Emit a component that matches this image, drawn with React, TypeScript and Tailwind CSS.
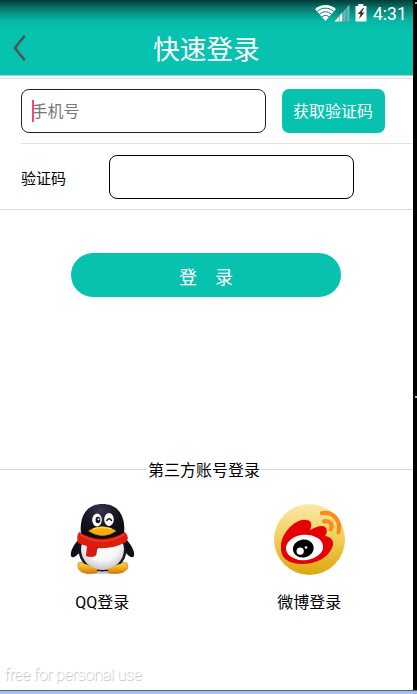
import React from "react";

function StatusBar() {
  return (
    <div className="flex h-[28px] items-start justify-end pr-[7px] text-white">
      <svg className="mt-[4px] h-[18px] w-[52px]" viewBox="0 0 52 18">
        <path d="M0 5C6-.2 15-.2 21 5L10.5 17Z" fill="#fff" />
        <path d="M2.4 7.2C7 3.2 14 3.2 18.6 7.2M4.6 10.1C8.1 7 12.9 7 16.4 10.1M7 12.8C9 11 12 11 14 12.8" fill="none" stroke="#087b72" strokeWidth="1" />
        <path d="M19.5 17.5 34.5 .5V17.5Z" fill="#62b9b0" />
        <path d="M19.5 17.5 27.5 8.5V17.5Z" fill="#fff" />
        <path d="M24.3 12v6M27.8 8v10M31.3 4v14" stroke="#168a80" strokeWidth=".6" />
        <path d="M43.3 0h5v2H51.5v15.5H40.5V2h2.8Z" fill="#fff" />
        <path d="m48 4-5.3 6h2.8l-1.5 5 5.5-6.6h-2.8L49 4Z" fill="#333" />
      </svg>
      <span className="ml-[6px] mt-[2px] w-[33px] whitespace-nowrap text-[17.5px] leading-6">4:31</span>
    </div>
  );
}

function QQIcon() {
  return (
    <svg className="h-[73px] w-[66px]" viewBox="69 503 66 73">
      <defs>
        <radialGradient id="coat" cx=".45" cy=".15" r=".8"><stop stopColor="#37364b" /><stop offset=".55" stopColor="#14131d" /><stop offset="1" stopColor="#09090e" /></radialGradient>
        <radialGradient id="belly" cx=".5" cy=".35" r=".65"><stop stopColor="#fff" /><stop offset=".65" stopColor="#f6f6f8" /><stop offset="1" stopColor="#c2c2cc" /></radialGradient>
        <linearGradient id="foot" x1="0" y1="0" x2="0" y2="1"><stop stopColor="#ffd43c" /><stop offset="1" stopColor="#dd7a00" /></linearGradient>
      </defs>
      <ellipse cx="102" cy="572" rx="22" ry="2" fill="#777" opacity=".4" />
      <path d="M80 538C74 544 70 551 71 556Q73 560 80 552ZM125 538C131 544 135 551 134 556Q132 560 125 552Z" fill="#111019" />
      <path d="M78 563Q87 560 92 566L98 569Q100 573 91 573.5Q82 574 78 568ZM127 563Q118 560 113 566L107 569Q105 573 114 573.5Q124 574 128 568Z" fill="url(#foot)" stroke="#bd6504" strokeWidth=".5" />
      <ellipse cx="102.5" cy="550" rx="24" ry="21.5" fill="#171620" />
      <ellipse cx="102.5" cy="549.5" rx="21.5" ry="20.5" fill="url(#belly)" />
      <path d="M78 567Q82 562 88 565L97 569Q98 573 89 573Q81 573 78 569ZM127 567Q123 562 117 565L108 569Q107 573 116 573Q124 573 127 569Z" fill="url(#foot)" />
      <path d="M81.5 538C78 517 86 504 102.5 504S127 517 123.5 538Q103 550 81.5 538Z" fill="url(#coat)" />
      <ellipse cx="97" cy="520" rx="4.8" ry="6.5" fill="#fff" /><ellipse cx="109" cy="519.5" rx="4.8" ry="6.5" fill="#fff" />
      <ellipse cx="98" cy="520" rx="2.4" ry="3.3" fill="#111" /><circle cx="98.5" cy="519.3" r="1" fill="#fff" />
      <path d="M106.8 520.5Q109.2 517 111.5 520.5" fill="none" stroke="#111" strokeWidth="1.4" strokeLinecap="round" />
      <path d="M79 532Q102 546 125 532Q130 538 126 542Q104 554 78 543Q76 537 79 532Z" fill="#df1d0d" />
      <path d="M80 534.5Q102 548 124 534.5" fill="none" stroke="#f2442b" strokeWidth="1.2" />
      <path d="M87 545Q92 547 98 546L95.5 556Q91 558 86 556Z" fill="#d9190f" />
      <path d="M98 547Q95 550 96 555" fill="none" stroke="#941108" strokeWidth=".8" />
      <path d="M88.5 531Q94 527 102.5 526.5Q111 527 116 531Q111 535 102.5 535.7Q94 535 88.5 531Z" fill="#f9ad10" stroke="#ce7700" strokeWidth=".5" />
      <path d="M93 529Q102 526 111.5 529" stroke="#ffdc45" strokeWidth="1.7" fill="none" />
    </svg>
  );
}

function WeiboIcon() {
  return (
    <svg className="h-[71px] w-[71px]" viewBox="0 0 71 71">
      <defs><linearGradient id="gold" x1="0" y1="0" x2="0" y2="1"><stop stopColor="#fce9aa" /><stop offset=".5" stopColor="#f0cc58" /><stop offset="1" stopColor="#dda60c" /></linearGradient></defs>
      <circle cx="35.5" cy="35.5" r="35.5" fill="url(#gold)" />
      <path d="M7 42C7 31 18 18 28 16C37 15 39 19 36 26Q49 19 52 24Q54 28 51 32C58 33 61 38 58 44C53 55 40 60.5 27 60C13 59.5 6 53 7 42Z" fill="#e50005" />
      <ellipse cx="30.5" cy="43.5" rx="18.6" ry="12.7" transform="rotate(-5 30.5 43.5)" fill="#fff" />
      <ellipse cx="29.3" cy="44.5" rx="10.5" ry="9" transform="rotate(-12 29.3 44.5)" fill="#000" />
      <circle cx="26.2" cy="47.2" r="3.6" fill="#fff" /><circle cx="32" cy="43.5" r="1.3" fill="#fff" />
      <path d="M48 9C60 7.5 67.5 17.5 64.5 28.2M50 17.3C56 16.5 59.2 20.5 56.8 25.4" fill="none" stroke="#ff8a18" strokeWidth="4.2" strokeLinecap="round" />
    </svg>
  );
}

export default function App() {
  return (
    <div className="flex h-[694px] w-[417px] flex-col overflow-hidden bg-white text-black" style={{ fontFamily: 'Roboto, "Noto Sans CJK SC", sans-serif' }}>
      <div className="flex h-[690px]">
        <main className="flex w-[413px] flex-col bg-white">
          <header className="h-[76px] border-b border-[#8de2dc] bg-[#08c2b0] bg-[linear-gradient(to_bottom,#033c37_0px,#067c71_9px,#08b5a4_20px,#08c2b0_29px)]">
            <StatusBar />
            <div className="flex h-[43px] items-center">
              <svg className="-mt-[3px] ml-[13px] h-[26px] w-[13px]" viewBox="0 0 13 26"><path d="M11 1.5 2 13l9 11.5" fill="none" stroke="#4c5750" strokeWidth="2.6" strokeLinecap="round" /></svg>
              <h1 className="ml-[127px] whitespace-nowrap text-[26.7px] font-normal leading-[40px] text-white">快速登录</h1>
            </div>
          </header>
          <section className="mt-[2px] h-[132px] border-y border-[#dedede]">
            <div className="flex h-[64px] pl-[20.5px] pt-[10px]">
              <div className="flex h-[44px] w-[245.5px] items-center rounded-[8px] border border-[#222] pl-[10px]">
                <i className="-mt-[1px] h-[22px] w-[2px] bg-[#ff4081]" />
                <span className="-ml-[2px] mt-[2px] text-[16px] leading-6 text-[#777]">手机号</span>
              </div>
              <button className="ml-[15.5px] h-[43.5px] w-[103px] whitespace-nowrap rounded-[7px] bg-[#08c2b0] pt-[2px] text-[16px] leading-6 text-white">获取验证码</button>
            </div>
            <div className="ml-[21px] flex h-[66px] border-t border-[#e2e2e2] pt-[11px]">
              <span className="mt-[12px] w-[88px] text-[15px] leading-6">验证码</span>
              <div className="h-[43.5px] w-[245px] rounded-[8px] border border-black" />
            </div>
          </section>
          <button className="ml-[71px] mt-[43px] h-[44px] w-[270px] whitespace-pre rounded-full bg-[#08c2b0] pt-[5px] text-[18px] leading-6 text-white">登<span className="inline-block w-[18px]" />录</button>
          <div className="mt-[160px] flex h-[24px] items-center">
            <div className="h-px w-[147px] bg-[#d8d8d8]" />
            <span className="w-[114px] whitespace-nowrap pl-px pt-[3px] text-[16px] leading-6">第三方账号登录</span>
            <div className="h-px flex-1 bg-[#d8d8d8]" />
          </div>
          <section className="mt-[22px] flex h-[112px]">
            <div className="flex w-[205px] flex-col items-center"><QQIcon /><span className="mt-[15px] text-[16px] leading-6">QQ登录</span></div>
            <div className="flex w-[209px] flex-col items-center pl-px pt-px"><WeiboIcon /><span className="mt-[16px] text-[16px] leading-6">微博登录</span></div>
          </section>
          <div className="mt-auto h-[27px] pl-[4px] text-[16.5px] font-light leading-6 tracking-[-0.55px] text-white [text-shadow:1px_1px_1px_#bbb]">free for personal use</div>
        </main>
        <aside className="flex w-[4px] flex-col items-end bg-black">
          <i className="mt-[2px] h-[2px] w-[2px] bg-[#aaa]" />
          <i className="mt-[392px] h-[2px] w-[2px] bg-[#bbb]" />
        </aside>
      </div>
      <footer className="h-[4px] border-t border-[#4c627b] bg-[#a5c1e4]" />
    </div>
  );
}
